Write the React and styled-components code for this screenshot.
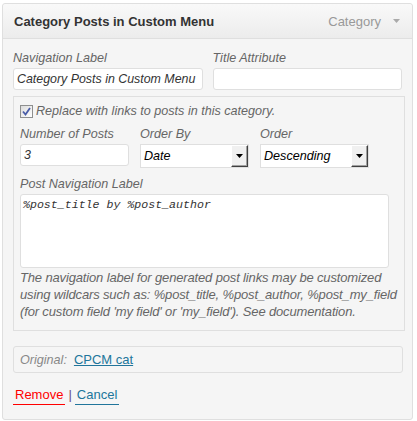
import React from 'react'
import styled, { createGlobalStyle } from 'styled-components'

const GlobalStyle = createGlobalStyle`
  html, body {
    margin: 0;
    padding: 0;
    background: #fff;
  }
  body {
    font-family: "Liberation Sans", Arial, sans-serif;
    font-size: 13px;
    color: #333;
  }
`

const Panel = styled.div`
  margin: 3px 4px 3px 2px;
  width: 411px;
  border: 1px solid #dfdfdf;
  border-radius: 3px;
  background: #f5f5f5;
  box-sizing: border-box;
`

const Header = styled.div`
  display: flex;
  align-items: center;
  justify-content: space-between;
  height: 34px;
  padding: 0 12px 0 11px;
  background: linear-gradient(to bottom, #f9f9f9, #ececec);
  border-bottom: 1px solid #dfdfdf;
  border-radius: 3px 3px 0 0;
`

const Title = styled.span`
  font-weight: bold;
  font-size: 13px;
  color: #333;
`

const Controls = styled.span`
  display: flex;
  align-items: center;
  gap: 12px;
  color: #999;
  font-size: 13px;
`

const Body = styled.div`
  padding: 11px 10px 14px 10px;
`

const Row = styled.div`
  display: flex;
  gap: ${({ gap }) => gap || 10}px;
`

const Field = styled.label`
  display: flex;
  flex-direction: column;
  width: ${({ w }) => w}px;
  margin-top: ${({ top }) => top || 0}px;
`

const Label = styled.span`
  font-style: italic;
  font-size: 12.6px;
  color: #666;
  line-height: 16px;
  margin-bottom: 2px;
  white-space: nowrap;
`

const TextInput = styled.div`
  box-sizing: border-box;
  height: 22px;
  border: 1px solid #dfdfdf;
  border-radius: 3px;
  background: #fff;
  padding: 0 3px;
  font-style: italic;
  font-size: 12.4px;
  color: #333;
  line-height: 20px;
  white-space: nowrap;
  overflow: hidden;
`

const Group = styled.div`
  margin-top: 6px;
  width: 392px;
  box-sizing: border-box;
  border: 1px solid #dfdfdf;
  padding: 6px 6px 10px 6px;
`

const CheckRow = styled.div`
  display: flex;
  align-items: center;
  gap: 3px;
  font-style: italic;
  font-size: 12.6px;
  color: #666;
  line-height: 16px;
  margin-bottom: 7px;
`

const Box = styled.span`
  display: inline-flex;
  align-items: center;
  justify-content: center;
  box-sizing: border-box;
  width: 13px;
  height: 13px;
  border: 1px solid #8e8f8f;
  background: linear-gradient(135deg, #dcdcdc, #fff);
`

const Select = styled.div`
  box-sizing: border-box;
  display: flex;
  align-items: center;
  justify-content: space-between;
  height: 24px;
  border: 1px solid #dfdfdf;
  background: #fff;
  padding-left: 3px;
  font-style: italic;
  font-size: 12.6px;
  color: #000;
  margin-bottom: -2px;
`

const SelectButton = styled.span`
  display: flex;
  align-items: center;
  justify-content: center;
  box-sizing: border-box;
  width: 17px;
  height: 22px;
  background: #f0f0f0;
  border-style: solid;
  border-width: 1px;
  border-color: #fff #404040 #404040 #fff;
  box-shadow: inset -1px -1px 0 #a0a0a0;
`

const TextArea = styled.div`
  box-sizing: border-box;
  width: 369px;
  height: 74px;
  border: 1px solid #dfdfdf;
  border-radius: 3px;
  background: #fff;
  padding: 2px 2px;
  font-family: "Liberation Mono", "DejaVu Sans Mono", monospace;
  font-style: italic;
  font-size: 11.6px;
  line-height: 15px;
  color: #333;
`

const Description = styled.p`
  margin: 1px 0 0 0;
  font-style: italic;
  font-size: 13px;
  letter-spacing: -0.15px;
  color: #666;
  line-height: 17px;
  width: 378px;
`

const Original = styled.div`
  margin-top: 15px;
  width: 390px;
  height: 27px;
  box-sizing: border-box;
  border: 1px solid #dfdfdf;
  border-radius: 3px;
  display: flex;
  align-items: center;
  gap: 7px;
  padding-left: 6px;
`

const OriginalLabel = styled.span`
  font-style: italic;
  font-size: 12.6px;
  color: #888;
`

const Link = styled.a`
  color: #21759b;
  text-decoration: underline;
  cursor: pointer;
`

const Actions = styled.div`
  display: flex;
  align-items: flex-start;
  gap: 3px;
  margin-top: 14px;
`

const Action = styled.a`
  color: ${({ danger }) => (danger ? '#f00' : '#21759b')};
  border-bottom: 1px solid ${({ danger }) => (danger ? '#f00' : '#21759b')};
  padding: 0 2px 1px 2px;
  line-height: 16px;
  cursor: pointer;
`

const Sep = styled.span`
  color: #6a4d7a;
  line-height: 16px;
`

const Caret = ({ color, w, h }) => (
  <svg width={w} height={h} viewBox="0 0 7 4">
    <path d="M0 0 H7 L3.5 4 Z" fill={color} />
  </svg>
)

const DropDown = ({ value }) => (
  <Select>
    {value}
    <SelectButton><Caret color="#000" w={7} h={4} /></SelectButton>
  </Select>
)

export default function App () {
  return (
    <>
      <GlobalStyle />
      <Panel>
        <Header>
          <Title>Category Posts in Custom Menu</Title>
          <Controls>Category<Caret color="#aaa" w={7} h={6} /></Controls>
        </Header>
        <Body>
          <Row>
            <Field w={190}>
              <Label>Navigation Label</Label>
              <TextInput>Category Posts in Custom Menu</TextInput>
            </Field>
            <Field w={190}>
              <Label>Title Attribute</Label>
              <TextInput />
            </Field>
          </Row>
          <Group>
            <CheckRow>
              <Box>
                <svg width="9" height="9" viewBox="0 0 9 9">
                  <path d="M1 4.5 L3.5 7.5 L8 1" stroke="#4a5da8" strokeWidth="1.8" fill="none" />
                </svg>
              </Box>
              Replace with links to posts in this category.
            </CheckRow>
            <Row gap={11}>
              <Field w={109}>
                <Label>Number of Posts</Label>
                <TextInput>3</TextInput>
              </Field>
              <Field w={109}>
                <Label>Order By</Label>
                <DropDown value="Date" />
              </Field>
              <Field w={109}>
                <Label>Order</Label>
                <DropDown value="Descending" />
              </Field>
            </Row>
            <Field w={369} top={10}>
              <Label>Post Navigation Label</Label>
              <TextArea>%post_title by %post_author</TextArea>
            </Field>
            <Description>
              The navigation label for generated post links may be customized using wildcars such as: %post_title, %post_author, %post_my_field (for custom field 'my field' or 'my_field'). See documentation.
            </Description>
          </Group>
          <Original>
            <OriginalLabel>Original:</OriginalLabel>
            <Link>CPCM cat</Link>
          </Original>
          <Actions>
            <Action danger>Remove</Action>
            <Sep>|</Sep>
            <Action>Cancel</Action>
          </Actions>
        </Body>
      </Panel>
    </>
  )
}
